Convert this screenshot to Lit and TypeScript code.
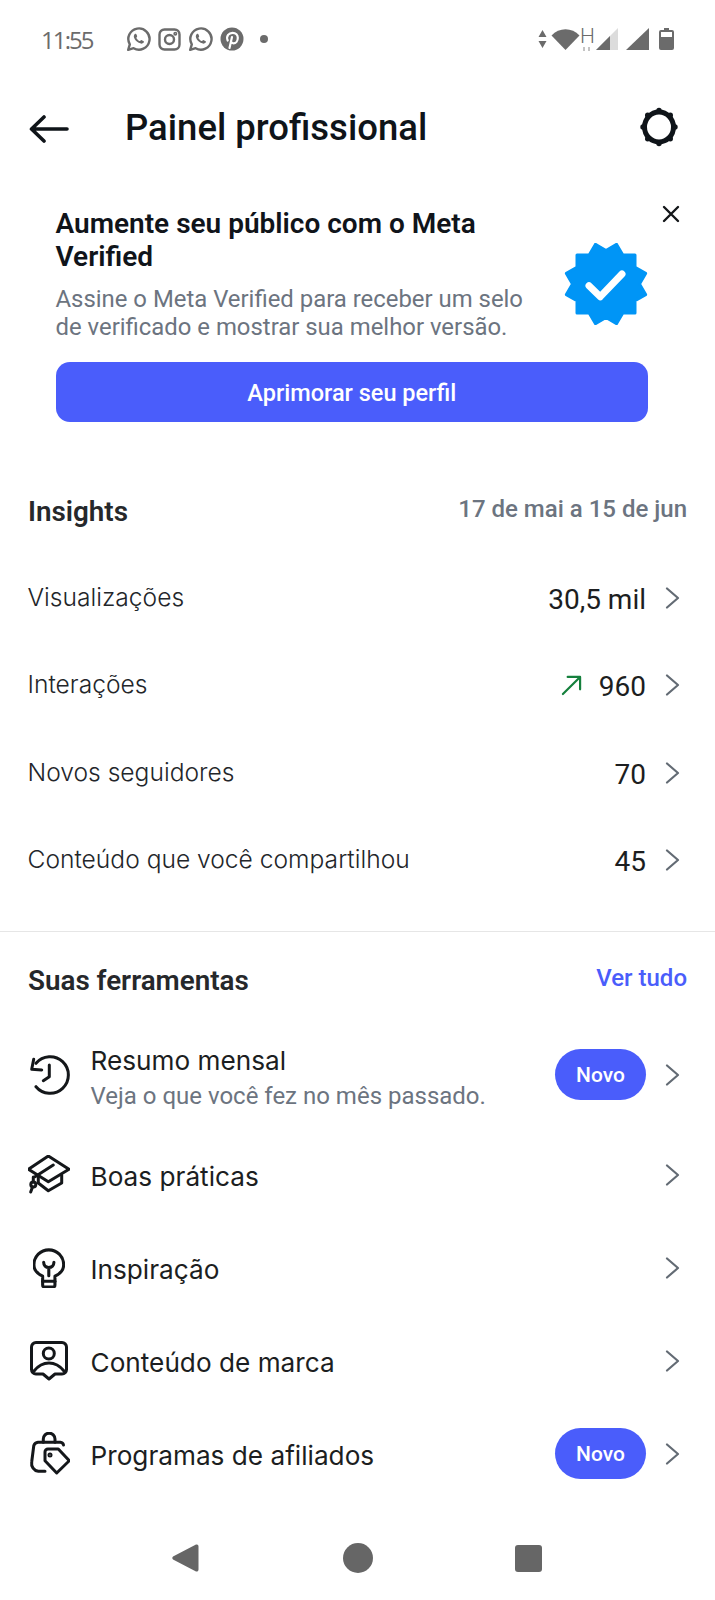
import { LitElement, html, css, svg } from 'lit';
import { customElement } from 'lit/decorators.js';

const chevron = html`<svg class="chev" viewBox="0 0 15 22" fill="none" stroke="#636b74" stroke-width="2.2" stroke-linecap="round" stroke-linejoin="round"><path d="M2 1.500 13 11 2 20.500"/></svg>`;

const whatsapp = svg`<path d="M2.200 22.800 3.800 17.400A10.600 10.600 0 1 1 7.600 21.200Z" fill="none" stroke="#6b6b6b" stroke-width="2.400" stroke-linejoin="round"/><path d="M8.600 7.200c.7-.7 1.600-.6 1.900.2l.6 1.500c.2.5 0 .9-.6 1.500-.2.3-.2.5 0 .9.7 1.200 1.600 2 2.900 2.700.4.2.6.1.9-.2.6-.7 1-.8 1.500-.6l1.500.7c.8.4.8 1.200.2 1.900-1 1.100-2.600 1.100-4.800 0-2.200-1.200-3.700-2.900-4.500-4.800-.6-1.600-.5-2.800.4-3.800Z" fill="#6b6b6b"/>`;

// 12 point seal, two points on top like the reference
function badgePoints() {
  const pts: string[] = [];
  const n = 12;
  for (let i = 0; i < n * 2; i++) {
    const r = i % 2 === 0 ? 41 : 33.5;
    const a = (Math.PI * i) / n - Math.PI / 2 + Math.PI / n;
    pts.push(`${(42 + r * Math.cos(a)).toFixed(1)},${(41 + r * Math.sin(a)).toFixed(1)}`);
  }
  return pts.join(' ');
}

function gearBumps() {
  return [0, 45, 90, 135, 180, 225, 270, 315].map((deg) => {
    const a = (deg * Math.PI) / 180;
    return svg`<circle cx=${(20 + 16 * Math.cos(a)).toFixed(1)} cy=${(21 + 16.500 * Math.sin(a)).toFixed(1)} r="2.700"/>`;
  });
}

const insights = [
  { label: 'Visualizações', value: '30,5 mil' },
  { label: 'Interações', value: '960', up: true },
  { label: 'Novos seguidores', value: '70' },
  { label: 'Conteúdo que você compartilhou', value: '45' },
];

const clockIcon = svg`<path d="M7 8.300A18.300 18.300 0 1 1 7 31.700"/><path d="M4.700 4.300 2.700 14.300 12.700 15"/><path d="M20.300 10V21.700L14.300 25.700"/>`;
const capIcon = svg`<path d="M20.300 1 41 14.300 20.300 26.700 .5 14.300Z"/><path d="M10.300 22V28L20.300 35.700 33.700 28V20"/><path d="M7 21.700 25.300 10"/><circle cx="5.300" cy="29.500" r="2.500"/><path d="M5.300 22V27M4.500 32 2.700 37"/>`;
const bulbIcon = svg`<path d="M9.300 27.500C4 25 .8 21 .8 16.300a14.500 14.500 0 0 1 29 0c0 4.700-3.200 8.700-8.500 11.200V36a2 2 0 0 1-2 2h-8a2 2 0 0 1-2-2Z"/><path d="M15.300 27V19M10.300 14c0 3 2 5 5 5s5-2 5-5"/><path d="M9.300 32.500h12"/>`;
const boxIcon = svg`<path d="M13 33H6a4.500 4.500 0 0 1-4.500-4.500V6A4.500 4.500 0 0 1 6 1.500h26A4.500 4.500 0 0 1 36.500 6v22.500A4.500 4.500 0 0 1 32 33h-7l-6 5Z"/><circle cx="18.800" cy="12.500" r="5.500"/><path d="M4 30C8 25 13 22 19 22s11 3 15 8"/>`;
const bagIcon = svg`<path d="M13.300 10.300V7A5.800 5.800 0 0 1 25 7V10.300"/><path d="M33.500 13A3.500 3.500 0 0 0 30.500 10.300H8A5 5 0 0 0 3.800 13.500L1.700 30A8 8 0 0 0 8.300 39.300H15"/><path d="M18.300 17H28.300L39.300 28.700 26.700 41 15 28.700V20.300A3 3 0 0 1 18.300 17Z"/><circle cx="20" cy="23" r="1"/>`;

const tools = [
  { title: 'Resumo mensal', sub: 'Veja o que você fez no mês passado.', isNew: true, icon: clockIcon, w: 42, h: 40, vb: '-1 0 42 40' },
  { title: 'Boas práticas', icon: capIcon, w: 42, h: 40, vb: '0 0 42 40' },
  { title: 'Inspiração', icon: bulbIcon, w: 32, h: 40, vb: '0 0 31 39' },
  { title: 'Conteúdo de marca', icon: boxIcon, w: 38, h: 40, vb: '0 0 38 40' },
  { title: 'Programas de afiliados', isNew: true, icon: bagIcon, w: 42, h: 43, vb: '-2 0 42 43' },
];

@customElement('app-root')
export class AppRoot extends LitElement {
  static styles = css`
    :host {
      display: block;
      width: 715px;
      height: 1600px;
      background: #fff;
      font-family: Roboto, sans-serif;
      color: #1c1e21;
      overflow: hidden;
    }
    svg { display: block; flex-shrink: 0; }

    .status {
      height: 78px;
      display: flex;
      align-items: center;
      padding-left: 41px;
      color: #6b6b6b;
    }
    .time {
      font-family: 'Open Sans', sans-serif;
      font-size: 24px;
      letter-spacing: -1.9px;
      width: 85px;
    }
    .notifs { display: flex; align-items: center; gap: 7px; }
    .dot { width: 8px; height: 8px; border-radius: 50%; background: #6b6b6b; margin-left: 9px; }
    .sys { margin-left: auto; margin-right: 41px; display: flex; align-items: center; }
    .h {
      font-size: 21px;
      line-height: 19px;
      width: 13px;
      height: 24px;
      margin: 0 3px 0 0;
      text-align: center;
      font-weight: 300;
    }
    .h-arrows { display: flex; justify-content: center; gap: 3px; margin-top: 1px; }
    .h-arrows span { width: 2px; height: 4px; background: #c4c4c4; }

    .top {
      height: 98px;
      display: flex;
      align-items: center;
      padding: 0 36px 0 29px;
    }
    .back { margin-top: 3px; }
    .top h1 {
      margin: 0 0 0 56px;
      font-size: 36.500px;
      font-weight: 500;
      color: #0f1419;
      flex: 1;
    }

    .promo { position: relative; padding: 31px 67px 0 55.500px; }
    .close { position: absolute; top: 29px; right: 35px; }
    .promo-main { display: flex; justify-content: space-between; }
    .promo h2 {
      margin: 0;
      font-size: 28px;
      line-height: 33px;
      font-weight: 600;
      color: #10141a;
      width: 450px;
    }
    .promo p {
      margin: 12px 0 0;
      font-size: 23.900px;
      line-height: 28px;
      color: #6c7480;
      width: 490px;
    }
    .badge { margin-top: 36px; }
    .cta {
      margin-top: 21px;
      height: 60px;
      border-radius: 14px;
      background: #4a5dfb;
      color: #fff;
      display: flex;
      align-items: center;
      justify-content: center;
      font-size: 23.500px;
      font-weight: 500;
      padding-top: 1px;
      box-sizing: border-box;
    }

    .sec-head {
      display: flex;
      justify-content: space-between;
      align-items: center;
      height: 40px;
      padding: 0 28px 0 28px;
    }
    .sec-head h3 { margin: 0; font-size: 27.800px; font-weight: 600; color: #26282b; }
    .insights-head { margin-top: 70px; }
    .insights-head h3 { margin-bottom: 2px; }
    .date { font-size: 24px; font-weight: 500; color: #6c7480; margin-bottom: 6px; }
    .link { font-size: 24px; font-weight: 500; color: #4a5dfb; margin-bottom: 4px; }

    .metrics { margin-top: 22px; }
    .metric {
      height: 87.500px;
      display: flex;
      align-items: center;
      padding: 0 35px 0 27.500px;
    }
    .metric .label {
      flex: 1;
      font-family: Inter, sans-serif;
      font-size: 24.600px;
      font-weight: 300;
      color: #23262a;
      margin-bottom: 2px;
    }
    .metric .up { margin-right: 17px; }
    .metric .value { font-size: 28px; color: #1c1e21; margin: 3px 19px 0 0; }
    .chev { width: 15px; height: 22px; }

    .divider { height: 1px; background: #e6e6e6; margin-top: 27px; }
    .tools-head { margin-top: 28px; }

    .tools { margin-top: 21px; }
    .tool {
      height: 93px;
      display: flex;
      align-items: center;
      padding: 0 35px 0 28px;
    }
    .tool.first { height: 107px; }
    .icon-box { width: 42px; display: flex; justify-content: center; margin-right: 20.500px; }
    .icon-box svg { fill: none; stroke: #14171a; stroke-width: 3; stroke-linecap: round; stroke-linejoin: round; }
    .tool-text { flex: 1; margin-top: 4px; }
    .tool.first .tool-text { margin-top: 6px; }
    .tool-title { font-family: Inter, sans-serif; font-size: 26.200px; color: #1c1e21; }
    .tool-sub { font-size: 24px; color: #6c7480; margin-top: 6px; }
    .pill {
      width: 91px;
      height: 51px;
      border-radius: 25.500px;
      background: #4a5dfb;
      color: #fff;
      font-size: 21px;
      font-weight: 500;
      display: flex;
      align-items: center;
      justify-content: center;
      margin-right: 19px;
      padding-top: 1px;
      box-sizing: border-box;
    }

    .nav {
      margin-top: 16px;
      height: 84px;
      display: flex;
      align-items: center;
      padding-left: 171px;
    }
    .circle { width: 30px; height: 30px; border-radius: 50%; background: #666; margin-left: 144px; }
    .square { width: 27px; height: 27px; border-radius: 3px; background: #666; margin-left: 142px; }
  `;

  render() {
    return html`
      <div class="status">
        <span class="time">11:55</span>
        <div class="notifs">
          <svg width="25" height="25" viewBox="0 0 25 25">${whatsapp}</svg>
          <svg width="23" height="23" viewBox="0 0 23 23" fill="none" stroke="#6b6b6b" stroke-width="2.400"><rect x="1.500" y="1.500" width="20" height="20" rx="5"/><circle cx="11.500" cy="11.500" r="4.500"/><circle cx="17.300" cy="5.700" r=".8"/></svg>
          <svg width="25" height="25" viewBox="0 0 25 25">${whatsapp}</svg>
          <svg width="24" height="24" viewBox="0 0 24 24"><circle cx="12" cy="12" r="11.500" fill="#6b6b6b"/><path d="M9.500 21 12 10M7.700 13.500C5.800 9 9 5.800 12.600 5.800c3.300 0 5.200 2.200 5.200 4.900 0 3.200-2 5.600-4.300 5.600-1.300 0-2.100-.8-2.300-1.600" fill="none" stroke="#fff" stroke-width="2.200" stroke-linecap="round"/></svg>
          <span class="dot"></span>
        </div>
        <div class="sys">
          <svg width="9" height="24" viewBox="0 0 9 24" fill="#6b6b6b" style="margin-right:4px"><path d="M4.500 3 8.500 10H.5ZM4.500 21 .5 14H8.500Z"/></svg>
          <svg width="29" height="22" viewBox="0 0 29 22" fill="#6b6b6b"><path d="M14.500 22 .5 7.500C8 -1 21 -1 28.500 7.500Z"/></svg>
          <div class="h">H<div class="h-arrows"><span></span><span></span></div></div>
          <svg width="22" height="22" viewBox="0 0 22 22"><path d="M22 0V22H0Z" fill="#dcdcdc"/><path d="M14 8V22H0Z" fill="#6b6b6b"/></svg>
          <svg width="23" height="22" viewBox="0 0 23 22" fill="#6b6b6b" style="margin-left:8px"><path d="M23 0V22H0Z"/></svg>
          <svg width="15" height="22" viewBox="0 0 15 22" fill="#6b6b6b" style="margin-left:10px"><path d="M5 0h5v2h3a2 2 0 0 1 2 2v16a2 2 0 0 1-2 2H2a2 2 0 0 1-2-2V4a2 2 0 0 1 2-2h3Z"/><rect x="2" y="4" width="11" height="5" fill="#fff"/></svg>
        </div>
      </div>

      <div class="top">
        <svg class="back" width="40" height="30" viewBox="0 0 40 30" fill="none" stroke="#0f1419" stroke-width="3.600" stroke-linecap="round" stroke-linejoin="round"><path d="M38 15H3M15 3 2.500 15 15 27"/></svg>
        <h1>Painel profissional</h1>
        <svg width="40" height="42" viewBox="0 0 40 42" fill="#0f1419">
          <ellipse cx="20" cy="21" rx="14.500" ry="15" fill="none" stroke="#0f1419" stroke-width="5"/>
          ${gearBumps()}
        </svg>
      </div>

      <div class="promo">
        <svg class="close" width="18" height="18" viewBox="0 0 18 18" stroke="#14171a" stroke-width="2.400" stroke-linecap="round"><path d="M2 2 16 16M16 2 2 16"/></svg>
        <div class="promo-main">
          <div>
            <h2>Aumente seu público com o Meta Verified</h2>
            <p>Assine o Meta Verified para receber um selo de verificado e mostrar sua melhor versão.</p>
          </div>
          <svg class="badge" width="84" height="82" viewBox="0 0 84 82">
            <polygon points=${badgePoints()} fill="#0095f6" stroke="#0095f6" stroke-width="3" stroke-linejoin="round"/>
            <path d="M25 42.700 36.300 53.700 58 31" fill="none" stroke="#fff" stroke-width="7" stroke-linecap="round" stroke-linejoin="round"/>
          </svg>
        </div>
        <div class="cta">Aprimorar seu perfil</div>
      </div>

      <div class="sec-head insights-head">
        <h3>Insights</h3>
        <span class="date">17 de mai a 15 de jun</span>
      </div>
      <div class="metrics">
        ${insights.map((m) => html`
          <div class="metric">
            <span class="label">${m.label}</span>
            ${m.up ? html`<svg class="up" width="21" height="21" viewBox="0 0 22 22" fill="none" stroke="#15803d" stroke-width="2.300" stroke-linecap="round" stroke-linejoin="round"><path d="M2 20 20 2M7 2h13v13"/></svg>` : ''}
            <span class="value">${m.value}</span>
            ${chevron}
          </div>
        `)}
      </div>

      <div class="divider"></div>

      <div class="sec-head tools-head">
        <h3>Suas ferramentas</h3>
        <span class="link">Ver tudo</span>
      </div>
      <div class="tools">
        ${tools.map((t, i) => html`
          <div class="tool ${i === 0 ? 'first' : ''}">
            <div class="icon-box"><svg width=${t.w} height=${t.h} viewBox=${t.vb}>${t.icon}</svg></div>
            <div class="tool-text">
              <div class="tool-title">${t.title}</div>
              ${t.sub ? html`<div class="tool-sub">${t.sub}</div>` : ''}
            </div>
            ${t.isNew ? html`<div class="pill">Novo</div>` : ''}
            ${chevron}
          </div>
        `)}
      </div>

      <div class="nav">
        <svg width="28" height="30" viewBox="0 0 28 30" fill="#666"><path d="M25 1.500a2 2 0 0 1 2.500 2v23a2 2 0 0 1-2.500 2L2 16.500a2 2 0 0 1 0-3Z"/></svg>
        <span class="circle"></span>
        <span class="square"></span>
      </div>
    `;
  }
}
